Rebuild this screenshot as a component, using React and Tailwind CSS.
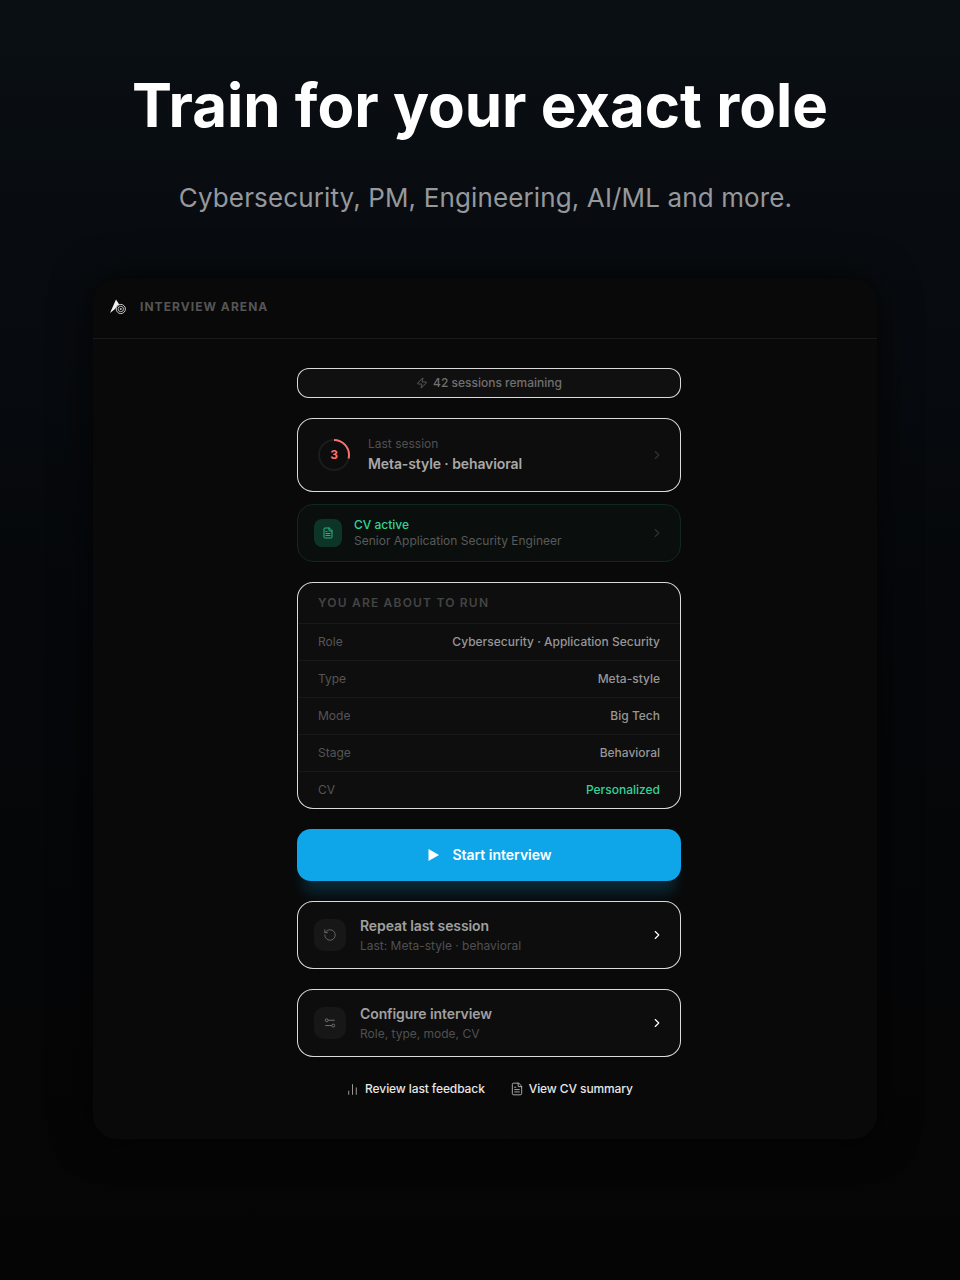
import { ChevronRight, Zap, FileText, RotateCcw, BarChart2 } from 'lucide-react';

const RUN_ROWS = [
  { label: 'Role', value: 'Cybersecurity · Application Security' },
  { label: 'Type', value: 'Meta-style' },
  { label: 'Mode', value: 'Big Tech' },
  { label: 'Stage', value: 'Behavioral' },
  { label: 'CV', value: 'Personalized', green: true },
];

function Logo() {
  return (
    <svg width="18" height="18" viewBox="0 0 18 18" fill="none">
      <path d="M7 1.5 L1 15 L6 11 L8.6 7.6 L10.6 7 Z" fill="#f2f2f2" />
      <circle cx="11.8" cy="11" r="4.6" fill="#0a0a0a" stroke="#c8c8c8" strokeWidth="1" />
      <circle cx="11.8" cy="11" r="2.7" stroke="#bdbdbd" strokeWidth="0.9" />
      <circle cx="11.8" cy="11" r="1" fill="#bdbdbd" />
    </svg>
  );
}

function SlidersGlyph() {
  return (
    <svg width="12" height="12" viewBox="0 0 14 14" fill="none" stroke="#757575" strokeWidth="1.1">
      <circle cx="3.2" cy="3.8" r="1.7" />
      <path d="M5 3.8h7.5" />
      <circle cx="10.8" cy="10" r="1.7" />
      <path d="M1.5 10h7.5" />
    </svg>
  );
}

function ActionCard({ icon, title, subtitle }) {
  return (
    <div className="flex h-[68px] items-center rounded-2xl border border-white/85 bg-[#0d0d0d] pl-4 pr-4">
      <div className="flex h-8 w-8 shrink-0 items-center justify-center rounded-[10px] bg-[#171717]">
        {icon}
      </div>
      <div className="ml-[14px] flex-1">
        <div className="text-sm leading-5 font-semibold tracking-[-0.1px] text-[#a0a0a0]">{title}</div>
        <div className="mt-[2px] text-xs leading-4 text-[#505050]">{subtitle}</div>
      </div>
      <ChevronRight size={14} className="text-white" />
    </div>
  );
}

export default function App() {
  return (
    <div className="h-[1280px] w-[960px] overflow-hidden bg-gradient-to-b from-[#0a0f14] via-[#05070a] to-[#050505] font-['Inter',sans-serif]">
      <h1 className="pt-[68px] text-center text-[60px] leading-[75px] font-bold text-white">
        Train for your exact role
      </h1>
      <p className="mt-[36px] pl-[11px] text-center text-[26px] leading-[38px] tracking-[0.13px] text-[#96989c]">
        Cybersecurity, PM, Engineering, AI/ML and more.
      </p>

      <div className="mt-[62px] ml-[93px] h-[860px] w-[784px] rounded-3xl bg-[#090909] shadow-[0_0_40px_rgba(0,0,0,0.7)]">
        {/* Header */}
        <div className="flex h-[60px] items-center border-b border-[#1a1a1a] pb-1 pl-4">
          <Logo />
          <span className="ml-[13px] text-xs font-bold tracking-[1.05px] text-[#555555]">INTERVIEW ARENA</span>
        </div>

        <div className="ml-[204px] flex w-[384px] flex-col pt-[29px]">
          <div className="flex h-[30px] items-center justify-center gap-[5px] rounded-xl border border-white/85 bg-[#101010] text-xs font-medium text-[#707070]">
            <Zap size={12} strokeWidth={1.5} />
            42 sessions remaining
          </div>

          {/* Last session */}
          <div className="mt-5 flex h-[74px] items-center rounded-2xl border border-white/85 bg-[#0d0d0d] pr-4 pl-5">
            <div className="relative h-8 w-8 shrink-0">
              <svg width="32" height="32" viewBox="0 0 32 32" fill="none" className="-rotate-90">
                <circle cx="16" cy="16" r="15" stroke="#1c1c1c" strokeWidth="2" />
                <circle cx="16" cy="16" r="15" stroke="#f87171" strokeWidth="2" strokeDasharray="27 94" />
              </svg>
              <span className="absolute inset-0 flex items-center justify-center text-xs font-bold text-[#f87171]">3</span>
            </div>
            <div className="ml-[18px] flex-1">
              <div className="text-xs leading-4 text-[#505050]">Last session</div>
              <div className="mt-[2px] text-sm leading-5 font-semibold tracking-[-0.1px] text-[#a8a8a8]">Meta-style · behavioral</div>
            </div>
            <ChevronRight size={14} className="text-[#333333]" />
          </div>

          {/* CV */}
          <div className="mt-3 flex h-[58px] items-center rounded-2xl border border-[#10291f] bg-[#0a0f0d] pr-4 pl-4">
            <div className="flex h-7 w-7 shrink-0 items-center justify-center rounded-lg bg-[#0d3527]">
              <FileText size={12} className="text-[#34d399]" strokeWidth={1.6} />
            </div>
            <div className="ml-3 flex-1">
              <div className="text-xs leading-4 font-medium text-[#34d399]">CV active</div>
              <div className="text-xs leading-4 text-[#5a5a5a]">Senior Application Security Engineer</div>
            </div>
            <ChevronRight size={14} className="text-[#333333]" />
          </div>

          {/* About to run */}
          <div className="mt-5 overflow-hidden rounded-2xl border border-white/85 bg-[#0e0e0e]">
            <div className="flex h-10 items-center px-5 text-xs font-semibold tracking-[1.2px] text-[#444444]">
              YOU ARE ABOUT TO RUN
            </div>
            {RUN_ROWS.map(row => (
              <div key={row.label} className="flex h-[37px] items-center justify-between border-t border-[#191919] px-5 text-xs">
                <span className="text-[#555555]">{row.label}</span>
                <span className={`font-medium ${row.green ? 'text-[#34d399]' : 'text-[#979797]'}`}>{row.value}</span>
              </div>
            ))}
          </div>

          <div className="mt-5 flex h-[52px] items-center justify-center gap-[13px] rounded-[14px] bg-[#0ea5e9] pl-[2px] text-sm font-semibold text-white shadow-[0_18px_14px_-6px_rgba(14,165,233,0.2)]">
            <svg width="11" height="12" viewBox="0 0 11 12" fill="currentColor">
              <path d="M0.5 0 L11 6 L0.5 12 Z" />
            </svg>
            Start interview
          </div>

          <div className="mt-5">
            <ActionCard
              icon={<RotateCcw size={14} strokeWidth={1.3} className="text-[#757575]" />}
              title="Repeat last session"
              subtitle="Last: Meta-style · behavioral"
            />
          </div>
          <div className="mt-5">
            <ActionCard icon={<SlidersGlyph />} title="Configure interview" subtitle="Role, type, mode, CV" />
          </div>

          <div className="mt-[24px] flex items-center justify-center gap-[25px] pl-[1px] text-xs leading-4 font-medium tracking-[-0.1px] text-[#e6e6e6]">
            <span className="flex items-center gap-[6px]">
              <BarChart2 size={13} strokeWidth={1.2} />
              Review last feedback
            </span>
            <span className="flex items-center gap-[5px]">
              <FileText size={14} strokeWidth={1.2} />
              View CV summary
            </span>
          </div>
        </div>
      </div>
    </div>
  );
}
